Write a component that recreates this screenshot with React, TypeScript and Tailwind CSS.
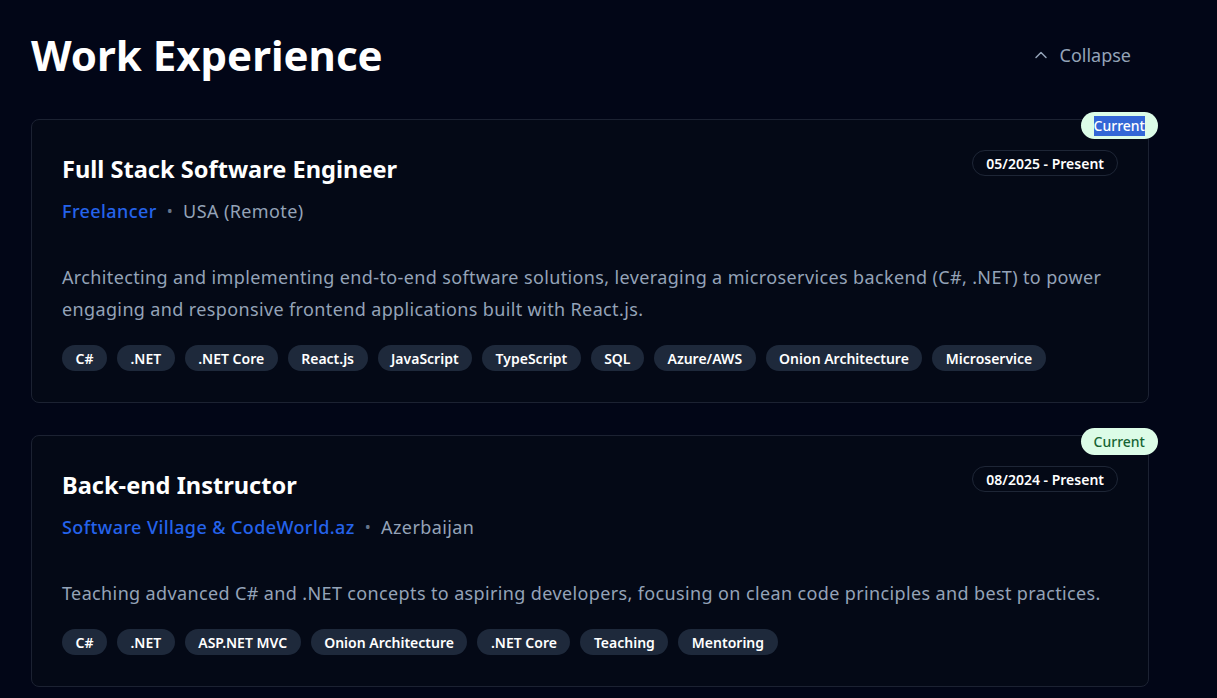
import { ChevronUp } from "lucide-react";

interface Job {
  title: string;
  company: string;
  location: string;
  period: string;
  description: string;
  tags: string[];
  selected?: boolean;
}

const jobs: Job[] = [
  {
    title: "Full Stack Software Engineer",
    company: "Freelancer",
    location: "USA (Remote)",
    period: "05/2025 - Present",
    description:
      "Architecting and implementing end-to-end software solutions, leveraging a microservices backend (C#, .NET) to power engaging and responsive frontend applications built with React.js.",
    tags: ["C#", ".NET", ".NET Core", "React.js", "JavaScript", "TypeScript", "SQL", "Azure/AWS", "Onion Architecture", "Microservice"],
    selected: true,
  },
  {
    title: "Back-end Instructor",
    company: "Software Village & CodeWorld.az",
    location: "Azerbaijan",
    period: "08/2024 - Present",
    description:
      "Teaching advanced C# and .NET concepts to aspiring developers, focusing on clean code principles and best practices.",
    tags: ["C#", ".NET", "ASP.NET MVC", "Onion Architecture", ".NET Core", "Teaching", "Mentoring"],
  },
];

function JobCard({ job }: { job: Job }) {
  return (
    <div className="relative rounded-lg border border-[#1c2232] bg-[#040916] px-[30px] pt-[33px] pb-[31px]">
      <span className="absolute -top-[8px] -right-[10px] h-[27px] rounded-full bg-[#dcfce7] px-[13px] flex items-center text-[14px] font-medium text-[#166534]">
        {job.selected ? <span className="bg-[#3367d6] text-white leading-[20px]">Current</span> : "Current"}
      </span>
      <div className="flex items-start justify-between">
        <h3 className="text-[23.6px] leading-[32px] font-bold text-white">{job.title}</h3>
        <span className="mt-[-3px] h-[26px] rounded-full border border-[#1e2636] px-[13px] flex items-center text-[14px] font-semibold text-white">
          {job.period}
        </span>
      </div>
      <div className="mt-3 flex items-center text-[18px] leading-[28px] tracking-[0.4px]">
        <span className="font-medium text-[#2563eb]">{job.company}</span>
        <span className="mx-[10px] text-[#64748b] text-[16px]">•</span>
        <span className="text-[#94a3b8]">{job.location}</span>
      </div>
      <p className="mt-9 text-[18px] leading-[32px] tracking-[0.37px] text-[#94a3b8]">{job.description}</p>
      <div className="mt-5 flex flex-wrap gap-[10px]">
        {job.tags.map((t) => (
          <span key={t} className="h-[26px] rounded-full bg-[#1e293b] px-[13.5px] flex items-center text-[14px] font-semibold text-white">
            {t}
          </span>
        ))}
      </div>
    </div>
  );
}

export default function App() {
  return (
    <div className="min-h-screen bg-[#020617] pl-[31px] pt-[30px] pb-6" style={{ fontFamily: '"Noto Sans", "Open Sans", sans-serif' }}>
      <div className="w-[1118px]">
        <div className="flex items-center justify-between">
          <h1 className="text-[42px] leading-[50px] font-bold text-white">Work Experience</h1>
          <button className="mr-[2px] flex items-center gap-[9px] px-4 py-2 text-[18px] text-[#94a3b8]">
            <ChevronUp size={20} strokeWidth={1.75} />
            Collapse
          </button>
        </div>
        <div className="mt-[39px] flex flex-col gap-8">
          {jobs.map((j) => (
            <JobCard key={j.title} job={j} />
          ))}
        </div>
      </div>
    </div>
  );
}
